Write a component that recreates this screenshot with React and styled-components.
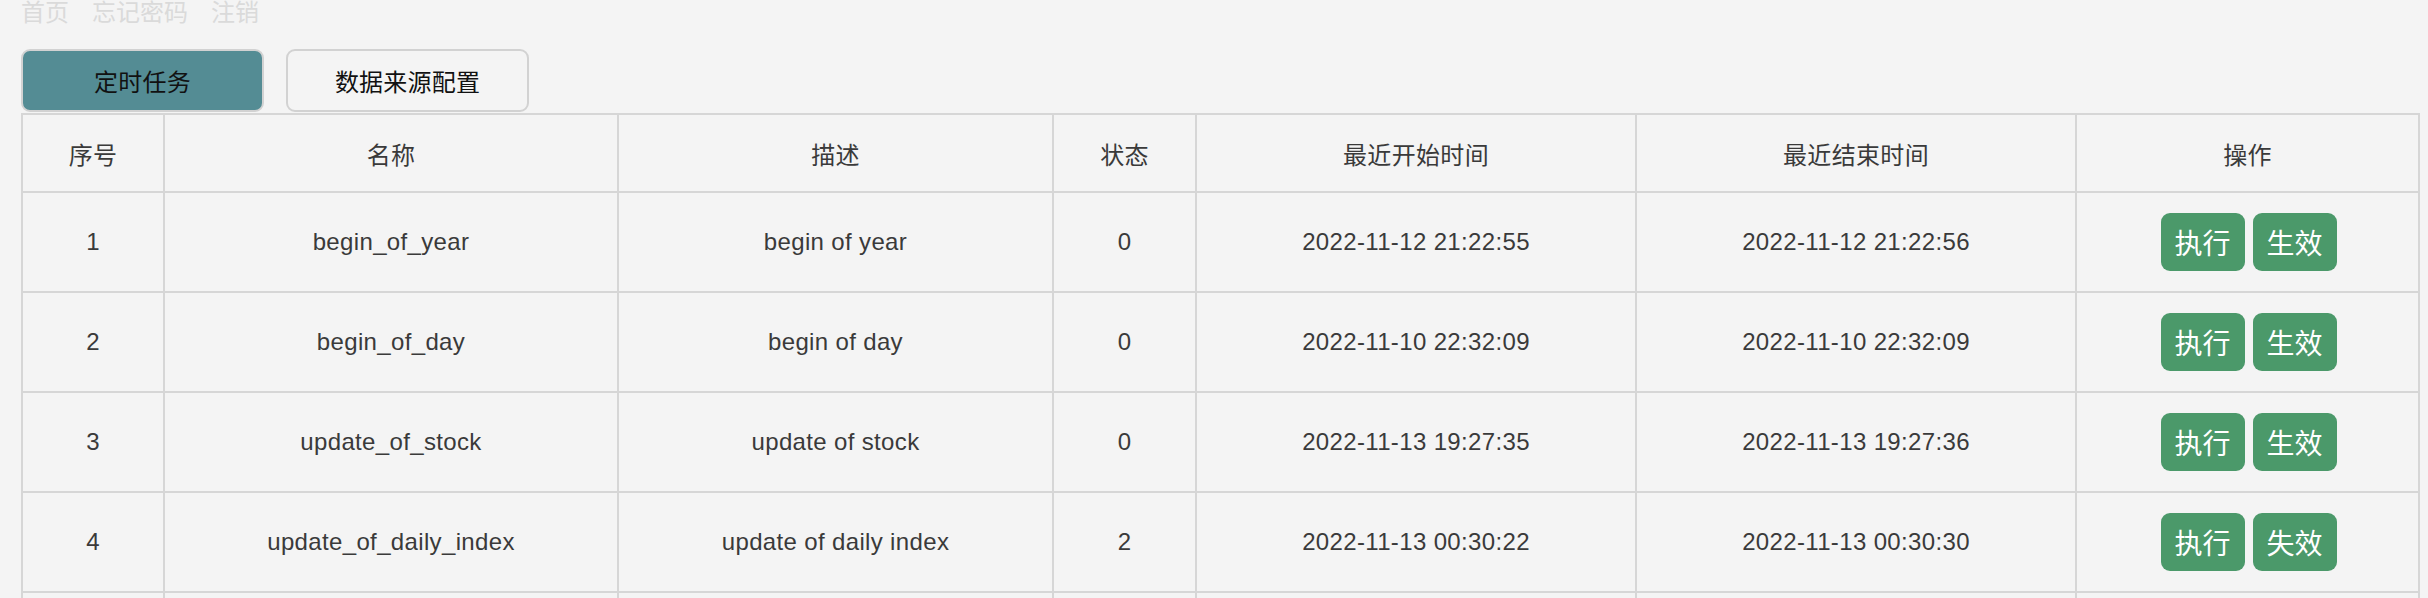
import React from 'react';
import styled, { createGlobalStyle } from 'styled-components';

const GlobalStyle = createGlobalStyle`
  html, body {
    margin: 0;
    padding: 0;
    background: #f4f4f4;
  }
  body {
    font-family: "Liberation Sans", "Noto Sans CJK SC", sans-serif;
    color: #333;
  }
`;

const Page = styled.div`
  padding-left: 21px;
  width: 2400px;
`;

const Nav = styled.nav`
  display: flex;
  gap: 23px;
  height: 26px;
  font-size: 24px;
  line-height: 25px;
  color: #dadada;
`;

const NavLink = styled.a`
  color: inherit;
  text-decoration: none;
  cursor: pointer;
`;

const Tabs = styled.div`
  display: flex;
  gap: 22px;
  margin-top: 23px;
  margin-bottom: 1px;
`;

const Tab = styled.button`
  width: 243px;
  height: 63px;
  border: 2px solid #d2d2d2;
  border-radius: 9px;
  background: ${props => (props.active ? '#548c94' : '#f4f4f4')};
  color: #111;
  font-family: inherit;
  font-size: 24px;
  letter-spacing: 0.2px;
  cursor: pointer;
`;

const Table = styled.table`
  width: 2399px;
  border-collapse: collapse;
  table-layout: fixed;
  border: 2px solid #d6d6d6;
  font-size: 24px;
  letter-spacing: 0.35px;
`;

const HeadCell = styled.th`
  height: 76px;
  padding: 0;
  border: 2px solid #d6d6d6;
  font-weight: normal;
  color: #3a3a3a;
  text-align: center;
`;

const Cell = styled.td`
  height: 98px;
  padding: 0;
  border: 2px solid #d6d6d6;
  color: #3a3a3a;
  text-align: center;
  vertical-align: middle;
`;

const Actions = styled.div`
  display: flex;
  justify-content: center;
  gap: 8px;
  padding-left: 2px;
`;

const ActionButton = styled.button`
  width: 84px;
  height: 58px;
  border: none;
  border-radius: 9px;
  background: #4b996a;
  color: #fff;
  font-family: inherit;
  font-size: 28px;
  letter-spacing: 0;
  cursor: pointer;
`;

const columns = [
  { title: '序号', width: 142 },
  { title: '名称', width: 454 },
  { title: '描述', width: 435 },
  { title: '状态', width: 143 },
  { title: '最近开始时间', width: 440 },
  { title: '最近结束时间', width: 440 },
  { title: '操作', width: 343 },
];

const tasks = [
  { id: 1, name: 'begin_of_year', desc: 'begin of year', status: 0, start: '2022-11-12 21:22:55', end: '2022-11-12 21:22:56', toggle: '生效' },
  { id: 2, name: 'begin_of_day', desc: 'begin of day', status: 0, start: '2022-11-10 22:32:09', end: '2022-11-10 22:32:09', toggle: '生效' },
  { id: 3, name: 'update_of_stock', desc: 'update of stock', status: 0, start: '2022-11-13 19:27:35', end: '2022-11-13 19:27:36', toggle: '生效' },
  { id: 4, name: 'update_of_daily_index', desc: 'update of daily index', status: 2, start: '2022-11-13 00:30:22', end: '2022-11-13 00:30:30', toggle: '失效' },
  { id: 5, name: 'update_of_index', desc: 'update of index', status: 0, start: '2022-11-13 00:30:31', end: '2022-11-13 00:30:40', toggle: '生效' },
];

const App = () => (
  <Page>
    <GlobalStyle />
    <Nav>
      <NavLink>首页</NavLink>
      <NavLink>忘记密码</NavLink>
      <NavLink>注销</NavLink>
    </Nav>

    <Tabs>
      <Tab active>定时任务</Tab>
      <Tab>数据来源配置</Tab>
    </Tabs>

    <Table>
      <colgroup>
        {columns.map(col => (
          <col key={col.title} style={{ width: col.width }} />
        ))}
      </colgroup>
      <thead>
        <tr>
          {columns.map(col => (
            <HeadCell key={col.title}>{col.title}</HeadCell>
          ))}
        </tr>
      </thead>
      <tbody>
        {tasks.map(task => (
          <tr key={task.id}>
            <Cell>{task.id}</Cell>
            <Cell>{task.name}</Cell>
            <Cell>{task.desc}</Cell>
            <Cell>{task.status}</Cell>
            <Cell>{task.start}</Cell>
            <Cell>{task.end}</Cell>
            <Cell>
              <Actions>
                <ActionButton>执行</ActionButton>
                <ActionButton>{task.toggle}</ActionButton>
              </Actions>
            </Cell>
          </tr>
        ))}
      </tbody>
    </Table>
  </Page>
);

export default App;
